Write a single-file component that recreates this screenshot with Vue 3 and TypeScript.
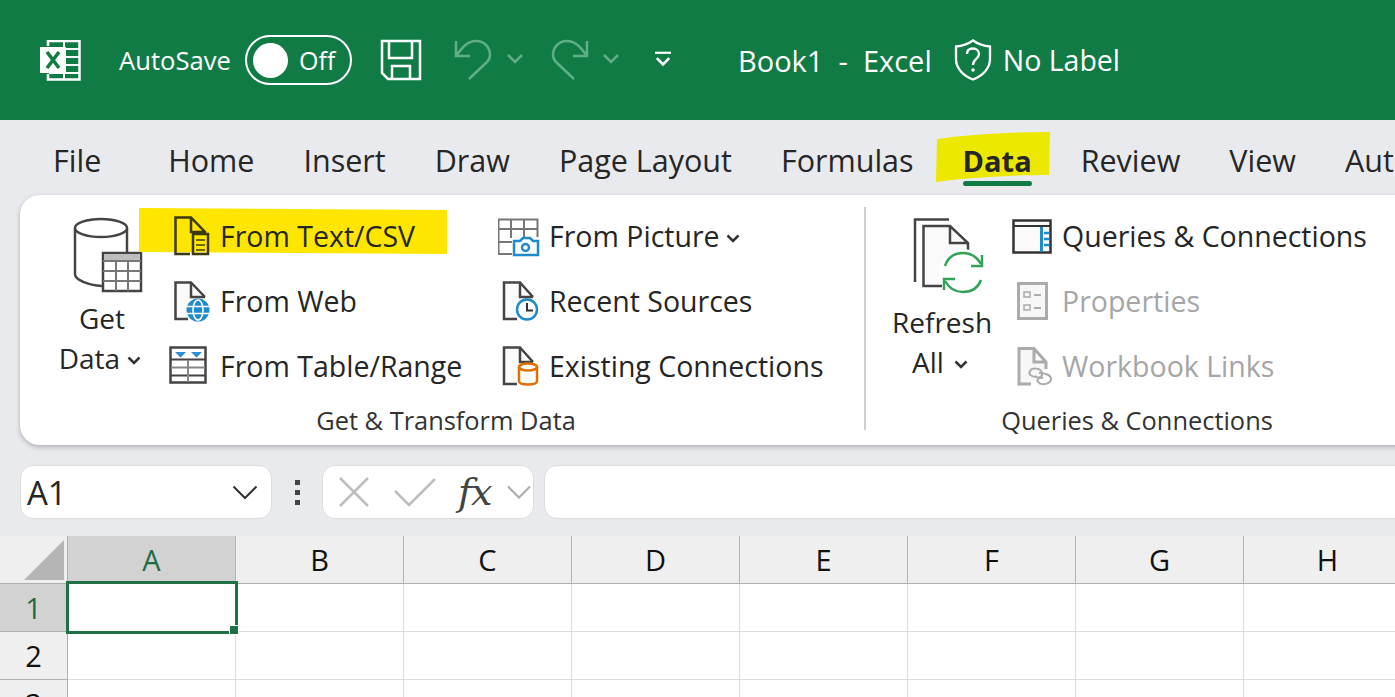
<template>
  <div class="page">
    <header class="titlebar">
      <svg class="ic-excel" viewBox="40 40 41 41" width="41" height="41">
        <path d="M48 46V41H79.500V79.500H48V74" fill="none" stroke="#fff" stroke-width="2.500" />
        <path d="M64 49H79M64 57H79M64 65H79M64 73H79M64 41V79M49 73H79" stroke="#fff" stroke-width="2" fill="none" />
        <rect x="40" y="47" width="26" height="26" fill="#fff" />
        <path d="M47 52L59 68M59 52L47 68" stroke="#107c41" stroke-width="3.500" />
      </svg>
      <span class="autosave">AutoSave</span>
      <div class="toggle">
        <span class="knob" />
        <span>Off</span>
      </div>
      <svg class="ic-save" viewBox="380 40 42 42" width="42" height="42">
        <path d="M382 42H420V80H388L382 74Z" fill="none" stroke="#fff" stroke-width="2.500" />
        <path d="M389 42V59H412V42M392 80V67H410V80" fill="none" stroke="#fff" stroke-width="2.500" />
      </svg>
      <svg class="ic-undo" viewBox="454 40 40 42" width="40" height="42">
        <path d="M456 42V57H470M456 57C462 49 467 42 476 42C485 42 490 49 490 56C490 59 489 61 487 63L469 80" fill="none" stroke="#5fae85" stroke-width="2.500" />
      </svg>
      <svg class="chev-s" viewBox="0 0 16 10" width="16" height="10"><path d="M1 1L8 8L15 1" fill="none" stroke="#5fae85" stroke-width="2.500" /></svg>
      <svg class="ic-redo" viewBox="550 40 40 42" width="40" height="42">
        <path d="M586 42V57H572M586 57C580 49 575 42 566 42C557 42 552 49 552 56C552 59 553 61 555 63L573 80" fill="none" stroke="#5fae85" stroke-width="2.500" />
      </svg>
      <svg class="chev-s" viewBox="0 0 16 10" width="16" height="10"><path d="M1 1L8 8L15 1" fill="none" stroke="#5fae85" stroke-width="2.500" /></svg>
      <svg class="ic-more" viewBox="0 0 20 18" width="18" height="16">
        <path d="M1 2H19" stroke="#fff" stroke-width="2.500" />
        <path d="M3 8L10 15L17 8" fill="none" stroke="#fff" stroke-width="3" />
      </svg>
      <span class="doc-title">Book1&nbsp; -&nbsp; Excel</span>
      <svg class="ic-shield" viewBox="0 0 38 42" width="38" height="42">
        <path d="M19 1.500C24 5 29 7 36 7.500V20C36 30 28 37 19 40.500C10 37 2 30 2 20V7.500C9 7 14 5 19 1.500Z" fill="none" stroke="#fff" stroke-width="2.300" />
        <path d="M13 15C13 11 16 9.500 19 9.500C22 9.500 25 11.500 25 15C25 20 19 20 19 26" fill="none" stroke="#fff" stroke-width="2.300" />
        <circle cx="19" cy="31" r="1.800" fill="#fff" />
      </svg>
      <span class="no-label">No Label</span>
    </header>

    <nav class="tabs">
      <span
        v-for="tab in tabs"
        :key="tab"
        class="tab"
        :class="{ active: tab === 'Data', file: tab === 'File' }"
      >
        <svg v-if="tab === 'Data'" class="mark-data" viewBox="0 0 116 52" width="116" height="52" preserveAspectRatio="none">
          <path d="M2 8C30 4 70 1 115 1L114 44C80 44 40 46 1 51Z" fill="#ede800" />
        </svg>
        <span class="tab-text">{{ tab }}</span>
      </span>
    </nav>

    <section class="ribbon">
      <div class="group group-transform">
        <div class="group-body">
          <div class="big-btn get-data">
            <svg class="big-ico" viewBox="70 214 74 80" width="74" height="80">
              <path d="M75 228V274C75 280 88 285 102 286" fill="none" stroke="#444" stroke-width="2.500" />
              <path d="M127 228V252" fill="none" stroke="#444" stroke-width="2.500" />
              <ellipse cx="101" cy="228" rx="26" ry="9" fill="#fff" stroke="#444" stroke-width="2.500" />
              <rect x="103" y="253" width="38" height="38" fill="#fff" stroke="#444" stroke-width="2.500" />
              <rect x="104" y="254" width="36" height="7" fill="#bdbdbd" />
              <path d="M103 271H141M103 281H141M116 261V291M128 261V291M103 261H141" stroke="#777" stroke-width="2" />
            </svg>
            <span class="big-label">Get</span>
            <span class="big-label with-chev">Data <svg class="chev" viewBox="0 0 14 9" width="14" height="9"><path d="M1.500 1.500L7 7L12.500 1.500" fill="none" stroke="#333" stroke-width="2.500" /></svg></span>
          </div>

          <div class="cmd-col col-a">
            <div class="cmd">
              <svg class="mark-csv" viewBox="0 0 308 46" width="308" height="46" preserveAspectRatio="none">
                <path d="M0 0L308 2V46L0 44Z" fill="#ffe600" />
              </svg>
              <svg class="ico" viewBox="168 212 42 44" width="42" height="44">
                <path d="M190 253H175.500V216.500H191L205 231V233M191 216.500V231H205" fill="none" stroke="#3c3a10" stroke-width="2.500" />
                <rect x="193" y="233" width="15" height="20" fill="none" stroke="#3c3a10" stroke-width="2.500" />
                <path d="M196 239H205M196 244H205M196 249H205" stroke="#6b6a10" stroke-width="2" />
              </svg>
              <span class="cmd-text">From Text/CSV</span>
            </div>
            <div class="cmd">
              <svg class="ico" viewBox="168 277 42 44" width="42" height="44">
                <path d="M188 318H175.500V281.500H191L205 296M191 281.500V296H205" fill="#fafafa" stroke="#444" stroke-width="2.500" />
                <circle cx="198" cy="309" r="11.500" fill="#1e8bcd" />
                <ellipse cx="198" cy="309" rx="5" ry="10" fill="none" stroke="#fff" stroke-width="1.600" />
                <path d="M187 305.500H209M187 312.500H209" stroke="#fff" stroke-width="1.600" />
              </svg>
              <span class="cmd-text">From Web</span>
            </div>
            <div class="cmd">
              <svg class="ico" viewBox="168 342 42 44" width="42" height="44">
                <rect x="170.500" y="346.500" width="35" height="35" fill="#fff" stroke="#444" stroke-width="2.500" />
                <path d="M175 351H186L180.500 356.500ZM191 351H202L196.500 356.500Z" fill="#2e8fd0" />
                <path d="M171 358.500H205M171 374.500H205" stroke="#444" stroke-width="2" />
                <path d="M171 366.500H205M188 359V381" stroke="#888" stroke-width="2" />
              </svg>
              <span class="cmd-text">From Table/Range</span>
            </div>
          </div>

          <div class="cmd-col col-b">
            <div class="cmd">
              <svg class="ico" viewBox="498 212 42 44" width="42" height="44">
                <path d="M512 253H498.500V218.500H537.500V236" fill="none" stroke="#777" stroke-width="2" />
                <path d="M499 228H537M499 241H512M511 219V237M524 219V236" fill="none" stroke="#777" stroke-width="2" />
                <path d="M514 240H520L523 237H530L533 240H538V254H514Z" fill="#fff" stroke="#1e8bcd" stroke-width="2.500" />
                <circle cx="525.500" cy="246.500" r="3.500" fill="none" stroke="#1e8bcd" stroke-width="2.500" />
              </svg>
              <span class="cmd-text">From Picture <svg class="chev" viewBox="0 0 14 9" width="14" height="9"><path d="M1.500 1.500L7 7L12.500 1.500" fill="none" stroke="#333" stroke-width="2.500" /></svg></span>
            </div>
            <div class="cmd">
              <svg class="ico" viewBox="498 277 42 44" width="42" height="44">
                <path d="M517 318H504V281.500H520L533 296M520 281.500V296H533" fill="#fafafa" stroke="#444" stroke-width="2.500" />
                <circle cx="527" cy="308.500" r="10" fill="#fff" stroke="#1e8bcd" stroke-width="2.500" />
                <path d="M527 302V309.500H533" fill="none" stroke="#333" stroke-width="2" />
              </svg>
              <span class="cmd-text">Recent Sources</span>
            </div>
            <div class="cmd">
              <svg class="ico" viewBox="498 342 42 44" width="42" height="44">
                <path d="M517 383H504V346.500H520L533 361M520 346.500V361H533" fill="#fafafa" stroke="#444" stroke-width="2.500" />
                <path d="M519 366V380C519 382 522 383.500 528 383.500C534 383.500 537 382 537 380V366" fill="#fff" stroke="#e07000" stroke-width="2.500" />
                <ellipse cx="528" cy="366" rx="9" ry="3.500" fill="#fff" stroke="#e07000" stroke-width="2.500" />
              </svg>
              <span class="cmd-text">Existing Connections</span>
            </div>
          </div>
        </div>
        <div class="group-label">Get &amp; Transform Data</div>
      </div>

      <div class="divider" />

      <div class="group group-queries">
        <div class="group-body">
          <div class="big-btn refresh">
            <svg class="big-ico" viewBox="910 214 76 80" width="76" height="80">
              <path d="M915 282V219.500H949" fill="none" stroke="#444" stroke-width="2.500" />
              <path d="M942 286H923.500V226H950L968 243V252M950 226V243H968" fill="#fafafa" stroke="#444" stroke-width="2.500" />
              <circle cx="963" cy="273" r="24" fill="#fff" />
              <path d="M945 266C948 257 955 253 963 253C971 253 977 257 981 264M981 280C978 288 971 292 963 292C955 292 949 288 945 281" fill="none" stroke="#33a457" stroke-width="2.500" />
              <path d="M982 255V266H971M944 290V279H955" fill="none" stroke="#33a457" stroke-width="2.500" />
            </svg>
            <span class="big-label">Refresh</span>
            <span class="big-label with-chev all">All <svg class="chev" viewBox="0 0 14 9" width="14" height="9"><path d="M1.500 1.500L7 7L12.500 1.500" fill="none" stroke="#333" stroke-width="2.500" /></svg></span>
          </div>

          <div class="cmd-col col-c">
            <div class="cmd">
              <svg class="ico" viewBox="1011 212 42 44" width="42" height="44">
                <rect x="1012.500" y="219.500" width="37" height="32" fill="#fafafa" stroke="#333" stroke-width="2.500" />
                <path d="M1013 225H1049" stroke="#333" stroke-width="2" />
                <path d="M1040.500 226V251" stroke="#1e8bcd" stroke-width="3" />
                <path d="M1043 232H1048M1043 238H1048M1043 244H1048" stroke="#1e8bcd" stroke-width="2.500" />
              </svg>
              <span class="cmd-text">Queries &amp; Connections</span>
            </div>
            <div class="cmd disabled">
              <svg class="ico" viewBox="1011 277 42 44" width="42" height="44">
                <rect x="1017.500" y="282.500" width="28" height="35" fill="#f7f7f7" stroke="#ababab" stroke-width="3" />
                <path d="M1023 291H1029V296H1023ZM1023 304H1029V309H1023Z" fill="none" stroke="#ababab" stroke-width="1.500" />
                <path d="M1033 294H1040M1033 307H1040" stroke="#ababab" stroke-width="2" />
              </svg>
              <span class="cmd-text">Properties</span>
            </div>
            <div class="cmd disabled">
              <svg class="ico" viewBox="1011 342 42 44" width="42" height="44">
                <path d="M1030 383H1018V347.500H1033L1045 361V368M1033 347.500V361H1045" fill="#f7f7f7" stroke="#ababab" stroke-width="3" />
                <path d="M1036 376C1030 376 1027 373 1029 370C1031 366 1040 367 1041 372C1042 376 1037 378 1034 375" fill="none" stroke="#ababab" stroke-width="2" />
                <path d="M1038 372C1044 372 1050 374 1050 378C1050 383 1040 385 1037 381C1035 378 1038 376 1042 377" fill="none" stroke="#ababab" stroke-width="2" />
              </svg>
              <span class="cmd-text">Workbook Links</span>
            </div>
          </div>
        </div>
        <div class="group-label">Queries &amp; Connections</div>
      </div>
    </section>

    <section class="formula-row">
      <div class="name-box">
        <span>A1</span>
        <svg viewBox="0 0 26 15" width="26" height="15"><path d="M1.500 1.500L13 13L24.500 1.500" fill="none" stroke="#333" stroke-width="2" /></svg>
      </div>
      <div class="grip"><i /><i /><i /></div>
      <div class="fx-box">
        <svg class="fx-x" viewBox="0 0 32 32" width="32" height="32"><path d="M2 2L30 30M30 2L2 30" stroke="#bdbdbd" stroke-width="2.500" /></svg>
        <svg class="fx-check" viewBox="0 0 42 30" width="42" height="30"><path d="M1 14L15 28L41 2" fill="none" stroke="#bdbdbd" stroke-width="2.500" /></svg>
        <span class="fx-text">fx</span>
        <svg class="fx-chev" viewBox="0 0 24 15" width="24" height="15"><path d="M1 1.500L12 12.500L23 1.500" fill="none" stroke="#aaa" stroke-width="2" /></svg>
      </div>
      <div class="formula-input" />
    </section>

    <section class="sheet">
      <div class="corner">
        <span class="corner-tri" />
      </div>
      <div
        v-for="col in columns"
        :key="col"
        class="col-head"
        :class="{ selected: col === 'A' }"
      >{{ col }}</div>
      <template v-for="row in rows" :key="row">
        <div class="row-head" :class="{ selected: row === 1 }">{{ row }}</div>
        <div v-for="col in columns" :key="col + row" class="cell" />
      </template>
      <div class="selection"><span class="handle" /></div>
    </section>
  </div>
</template>

<script setup lang="ts">
const tabs: string[] = ['File', 'Home', 'Insert', 'Draw', 'Page Layout', 'Formulas', 'Data', 'Review', 'View', 'Automate']
const columns: string[] = ['A', 'B', 'C', 'D', 'E', 'F', 'G', 'H']
const rows: number[] = [1, 2, 3]
</script>

<style>
html, body {
  margin: 0;
  overflow: hidden;
  background: #fff;
}
</style>

<style scoped>
.page {
  width: 1395px;
  height: 697px;
  overflow: hidden;
  background: #e9eaee;
  font-family: "Open Sans", "Noto Sans", sans-serif;
  font-stretch: 88%;
  color: #262626;
}

.titlebar {
  height: 120px;
  background: #117b46;
  color: #fff;
  display: flex;
  align-items: center;
  padding-left: 40px;
  font-size: 29px;
}

.ic-excel { margin-right: 38px; }
.autosave { width: 126px; font-size: 25.6px; }

.toggle {
  box-sizing: border-box;
  width: 107px;
  height: 50px;
  border: 2px solid #fff;
  border-radius: 25px;
  display: flex;
  align-items: center;
  padding-left: 6px;
  gap: 11px;
  font-size: 25px;
}

.knob {
  width: 35px;
  height: 35px;
  border-radius: 50%;
  background: #fff;
}

.ic-save { margin-left: 28px; }
.ic-undo { margin-left: 32px; }
.chev-s { margin-left: 13px; margin-top: -2px; }
.ic-redo { margin-left: 28px; }
.ic-redo + .chev-s { margin-left: 12px; }
.ic-more { margin-left: 35px; margin-top: -2px; }
.doc-title { margin-left: 66px; white-space: pre; }
.ic-shield { margin-left: 22px; }
.no-label { margin-left: 11px; font-size: 28.5px; }

.tabs {
  height: 75px;
  box-sizing: border-box;
  padding: 5px 0 0 53px;
  display: flex;
  align-items: center;
  gap: 49px;
  font-size: 30.5px;
  white-space: nowrap;
}

.tab {
  position: relative;
}

.tab.file { margin-right: 18px; }

.tab-text {
  position: relative;
}

.tab.active {
  font-size: 29px;
  font-weight: 700;
}

.tab.active::after {
  content: "";
  position: absolute;
  left: 0;
  right: 0;
  bottom: -6px;
  height: 5px;
  border-radius: 3px;
  background: #117b46;
}

.mark-data {
  position: absolute;
  left: -28px;
  top: -10px;
}

.ribbon {
  margin-left: 20px;
  width: 1420px;
  height: 250px;
  background: #fff;
  border-radius: 20px;
  box-shadow: 0 2px 5px rgba(0, 0, 0, 0.25);
  display: flex;
  box-sizing: border-box;
  padding-top: 12px;
}

.group {
  display: flex;
  flex-direction: column;
}

.group-body {
  display: flex;
  height: 196px;
}

.group-label {
  text-align: center;
  font-size: 25.4px;
  line-height: 34px;
  color: #333;
}

.group-transform {
  width: 844px;
  flex: none;
}

.group-transform .group-label { padding-left: 8px; }

.divider {
  width: 2px;
  height: 223px;
  background: #cfcfcf;
  flex: none;
}

.group-queries {
  flex: none;
  width: 553px;
}

.group-queries .group-label {
  width: 542px;
}

.big-btn {
  display: flex;
  flex-direction: column;
  align-items: center;
  font-size: 28px;
  line-height: 40px;
  padding-top: 7px;
  box-sizing: border-box;
}

.big-ico { margin-bottom: 4px; }

.get-data {
  width: 128px;
  margin-left: 18px;
}

.get-data .big-ico { margin-left: 10px; }

.refresh {
  width: 100px;
  margin-left: 26px;
}

.refresh .big-ico {
  margin-left: 12px;
  margin-bottom: 8px;
}

.with-chev { margin-right: 4px; }
.big-label .chev { vertical-align: 4px; }
.all .chev { margin-left: 3px; }

.cmd-col {
  display: flex;
  flex-direction: column;
  gap: 21px;
  padding-top: 6px;
  font-size: 28.5px;
  white-space: nowrap;
}

.col-a { margin-left: 2px; width: 330px; flex: none; }
.col-b { flex: none; }
.col-c { margin-left: 20px; flex: none; }

.cmd {
  position: relative;
  height: 44px;
  display: flex;
  align-items: center;
  gap: 10px;
}

.col-b .cmd { gap: 9px; }
.col-c .cmd { gap: 8px; }

.cmd.disabled { color: #a6a6a6; }

.cmd-text {
  position: relative;
  padding-top: 2px;
}

.cmd-text .chev { margin-left: -1px; vertical-align: 4px; }

.ico {
  position: relative;
  flex: none;
}

.mark-csv {
  position: absolute;
  left: -29px;
  top: -5px;
}

.formula-row {
  height: 54px;
  margin-top: 20px;
  display: flex;
  padding-left: 20px;
}

.name-box,
.fx-box,
.formula-input {
  box-sizing: border-box;
  background: #fff;
  border: 1px solid #dcdcdc;
  border-radius: 13px;
  display: flex;
  align-items: center;
  flex: none;
}

.name-box {
  width: 252px;
  padding: 0 13px 0 6px;
  justify-content: space-between;
  font-size: 33px;
}

.grip {
  width: 50px;
  flex: none;
  display: flex;
  flex-direction: column;
  justify-content: center;
  align-items: center;
  gap: 5px;
}

.grip i {
  width: 5px;
  height: 5px;
  background: #444;
}

.fx-box {
  width: 212px;
  padding-left: 15px;
}

.fx-check { margin-left: 24px; }

.fx-text {
  margin-left: 22px;
  width: 49px;
  font-family: "DejaVu Serif", "Liberation Serif", serif;
  font-style: italic;
  font-size: 38px;
  line-height: 44px;
  color: #444;
  letter-spacing: -1px;
}

.formula-input {
  margin-left: 10px;
  width: 900px;
}

.sheet {
  position: relative;
  margin-top: 17px;
  display: grid;
  grid-template-columns: 68px repeat(8, 168px);
  grid-template-rows: repeat(4, 48px);
  background: #fff;
  font-size: 29px;
  height: 161px;
  color: #111;
}

.corner {
  background: #efefef;
  box-sizing: border-box;
  border-bottom: 1px solid #aeaeae;
  border-right: 1px solid #aeaeae;
  display: flex;
  align-items: flex-end;
  justify-content: flex-end;
  padding: 0 3px 3px 0;
}

.corner-tri {
  width: 40px;
  height: 40px;
  background: #b5b5b5;
  clip-path: polygon(100% 0, 100% 100%, 0 100%);
}

.col-head {
  background: #efefef;
  box-sizing: border-box;
  border-bottom: 1px solid #aeaeae;
  border-right: 1px solid #b5b5b5;
  display: flex;
  align-items: center;
  justify-content: center;
}

.row-head {
  background: #efefef;
  box-sizing: border-box;
  border-bottom: 1px solid #aeaeae;
  border-right: 1px solid #aeaeae;
  display: flex;
  align-items: center;
  justify-content: center;
}

.selected {
  background: #d2d2d2;
  color: #1f6b45;
}

.cell {
  box-sizing: border-box;
  border-bottom: 1px solid #dcdcdc;
  border-right: 1px solid #dcdcdc;
}

.selection {
  position: absolute;
  left: 65.5px;
  top: 45px;
  width: 172px;
  height: 53px;
  box-sizing: border-box;
  border: 3px solid #1f7145;
}

.handle {
  position: absolute;
  right: -4px;
  bottom: -4px;
  width: 10px;
  height: 10px;
  background: #1f7145;
  border: 1px solid #fff;
  box-sizing: border-box;
}
</style>
